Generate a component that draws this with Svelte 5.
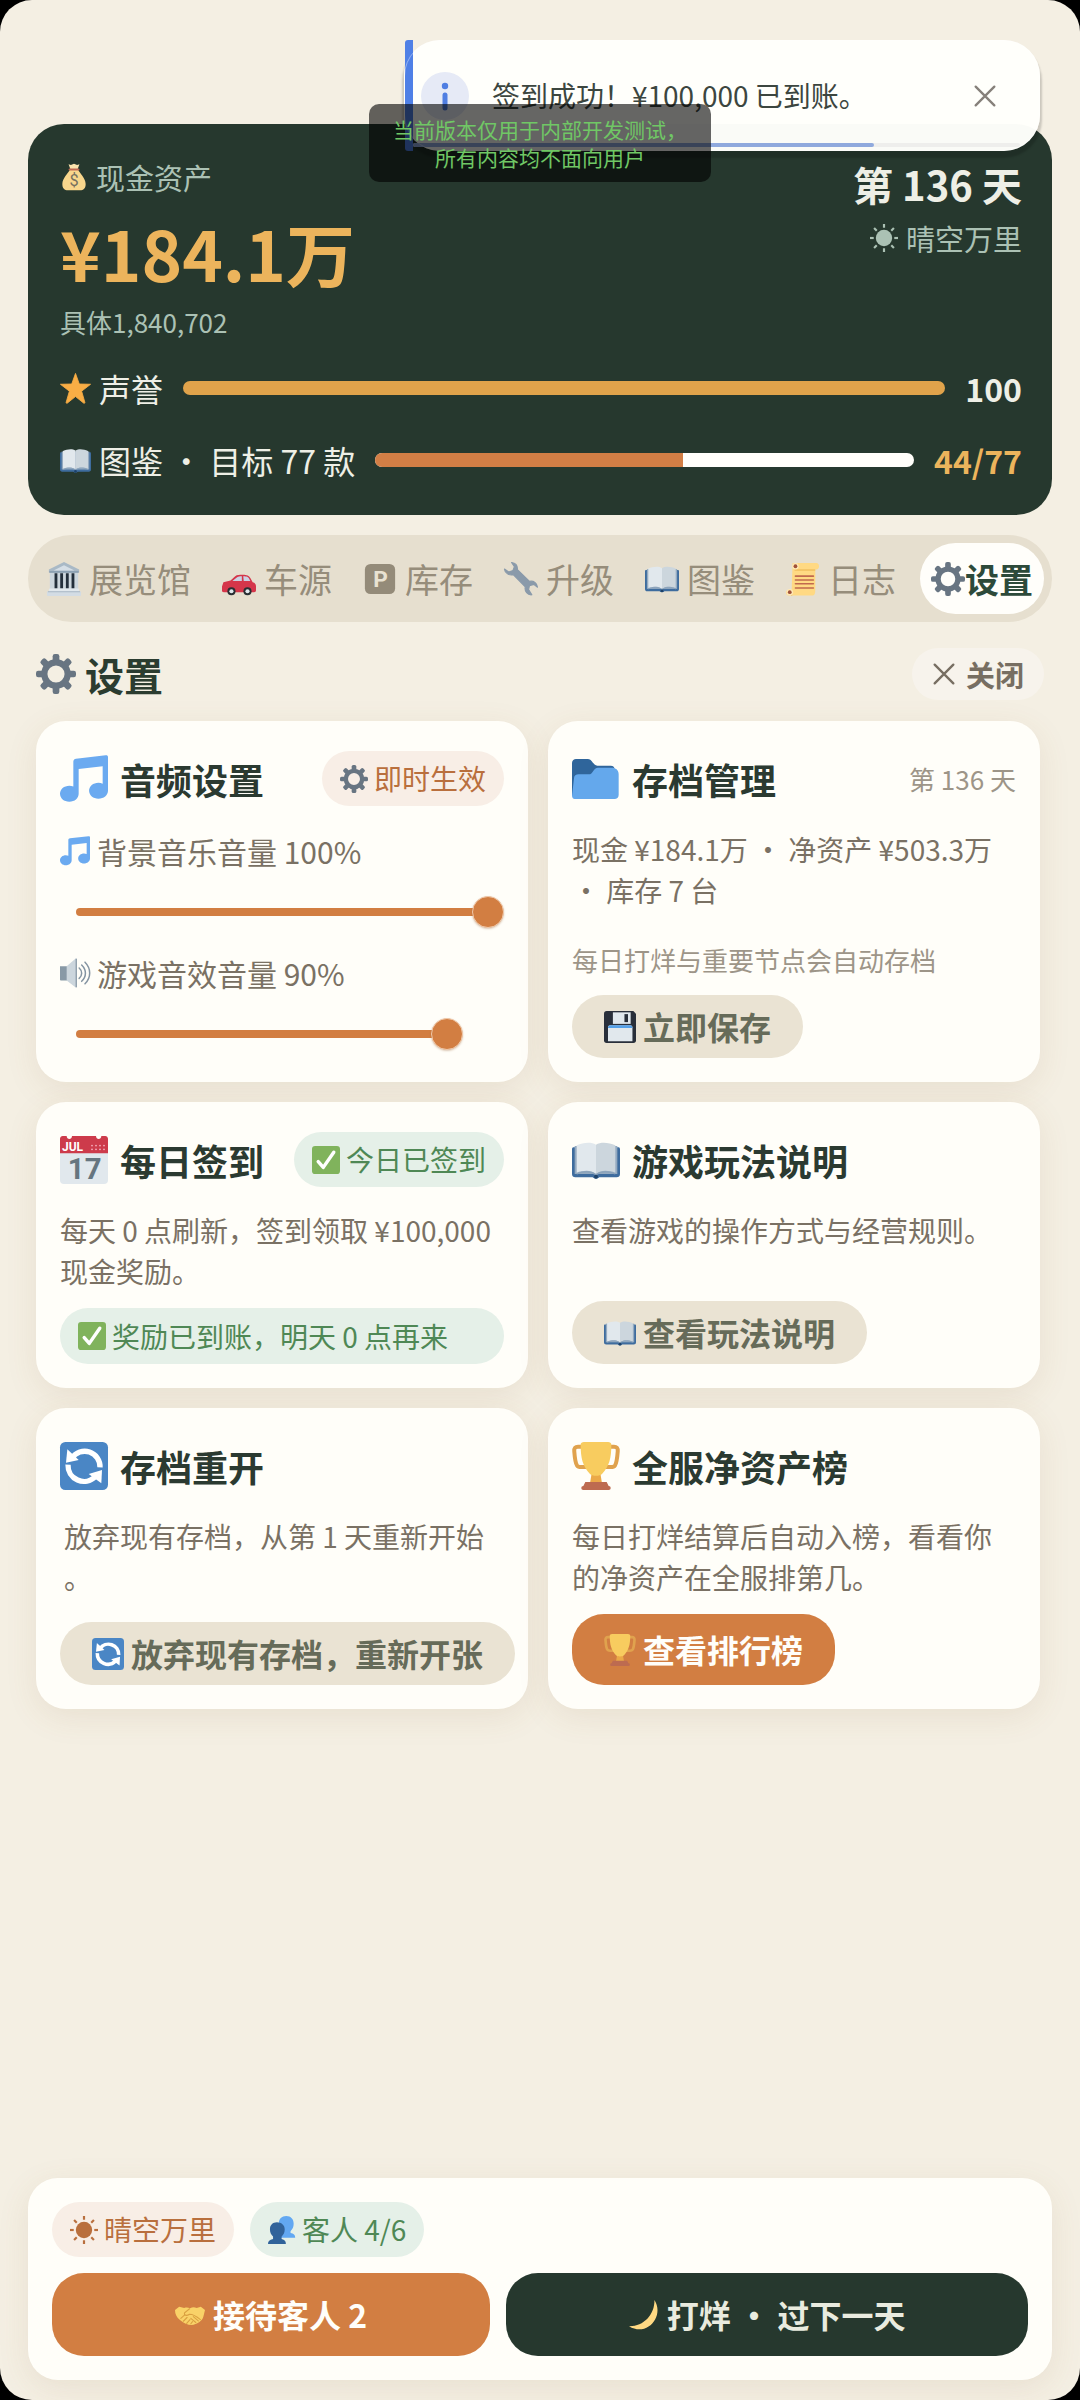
<script>
  const tabs = [
    { icon: 'museum', label: '展览馆' },
    { icon: 'car', label: '车源' },
    { icon: 'parking', label: '库存' },
    { icon: 'wrench', label: '升级' },
    { icon: 'book', label: '图鉴' },
    { icon: 'scroll', label: '日志' },
    { icon: 'gear', label: '设置', active: true }
  ];

  const teeth = [0, 45, 90, 135, 180, 225, 270, 315];
  const calendarDots = [24, 27, 30, 33];

  let music = $state(100);
  let effects = $state(90);
</script>

{#snippet icon(name)}
  <svg class="icon" viewBox="0 0 36 36" aria-hidden="true">
    {#if name === 'bag'}
      <path d="M11 1.5l3 1.2L18 1l4 1.7 3-1.2-2.5 7h-9z" fill="#fbe3ad" />
      <path d="M13 8h10c2 5 10 11 10 19 0 6-3 8-7 8H10c-4 0-7-2-7-8C3 19 11 13 13 8z" fill="#f8d68c" />
      <rect x="11" y="7" width="14" height="2.6" rx="1.3" fill="#bf6952" />
      <text x="18" y="30" text-anchor="middle" class="bag-sign">$</text>
    {:else if name === 'star'}
      <path d="M18 .5l4.4 12.3 13.1.3-10.4 8 3.7 12.8c.3 1-.5 1.6-1.4 1L18 27.3l-9.4 7.6c-.9.6-1.7 0-1.4-1l3.7-12.8-10.4-8 13.1-.3z" fill="#f9ae45" stroke="#f9ae45" stroke-width="1" stroke-linejoin="round" />
    {:else if name === 'book'}
      <path d="M1 8.5h34c.6 0 1 .6 1 1.4v18.6c0 1.600-1 2.500-2.500 2.500H20.500c-1 1.300-4 1.300-5 0H2.500C1 31 0 30.100 0 28.500V9.900c0-.8.4-1.400 1-1.400z" fill="#3e6c9e" />
      <path d="M2 7.500h32v21H2z" fill="#94aac0" />
      <path d="M3.500 7C8 5 14 4 18 6.500v22C14 25 8 26 3.500 27.500z" fill="#e1e8ed" />
      <path d="M32.500 7C28 5 22 4 18 6.500v22c4-3.500 10-2.500 14.500-1z" fill="#ccd6dd" />
      <path d="M3.500 28.500C8 26.500 14 26 18 29c4-3 10-2.500 14.500-.5" fill="none" stroke="#8ba3ba" stroke-width="1" />
      <circle cx="18" cy="30.600" r="1.500" fill="#1e4269" />
    {:else if name === 'sun'}
      <circle cx="18" cy="18" r="10.500" fill="currentColor" />
      {#each teeth as angle}
        <rect x="16.600" y="0" width="2.800" height="4.800" fill="currentColor" transform="rotate({angle} 18 18)" />
      {/each}
    {:else if name === 'museum'}
      <path d="M18 0l16 8v3H2V8z" fill="#a9b9c6" />
      <path d="M18 3.500L29 9H7z" fill="#d5dee6" />
      <path d="M3 11h30v19H3z" fill="#ccd6dd" />
      <path d="M8 12h3v16H8zM14 12h3v16h-3zM20 12h3v16h-3zM26 12h3v16h-3z" fill="#232f3b" />
      <path d="M2.500 9.500h31v2h-31z" fill="#8ca1b3" />
      <rect x="2" y="28" width="32" height="4" rx="1" fill="#e1e8ed" />
      <rect x="0" y="31" width="36" height="5" rx="1" fill="#d3dce4" />
      <path d="M1 31.500h34" stroke="#a6b5c2" stroke-width="1" />
    {:else if name === 'car'}
      <path d="M0 26l1.500-4.500L9 19.500l5-4.500c2-1.500 4-1.500 8-1.500 4.500 0 6.500 1 8 3.500l2.500 4.500c2.500.5 3.500 2 3.500 4.500v4c0 1.500-1 2-2 2H2c-1.500 0-2-.5-2-2z" fill="#d5364a" />
      <path d="M11 20l5-3.800c1.500-1 2.500-1.200 5-1.200v5zM22.500 15c4 0 5 .7 6 2.200l1.500 2.800h-7z" fill="#cbd3e4" />
      <circle cx="10" cy="31" r="4.300" fill="#292f33" /><circle cx="10" cy="31" r="2.200" fill="#e1e8ed" />
      <circle cx="27" cy="31" r="4.300" fill="#292f33" /><circle cx="27" cy="31" r="2.200" fill="#e1e8ed" />
    {:else if name === 'parking'}
      <rect x="2" y="2" width="32" height="32" rx="6" fill="#948b79" />
      <text x="18.500" y="26.500" text-anchor="middle" class="parking-sign">P</text>
    {:else if name === 'wrench'}
      <path d="M8 .5c4 .5 6.500 3 6.200 7.500L27 20.500c4.500-1 8 2 8.500 6.200l-4-3-4.500 1.300-1 4.200 3.500 5.500c-4.500.5-8-3.500-7-8.500L10 13.500C5.500 14.500 1 12 .5 7.500l4.500 3 4.500-1.500L11 5z" fill="#8a9aaa" stroke="#8a9aaa" stroke-width="1.200" stroke-linejoin="round" />
    {:else if name === 'scroll'}
      <path d="M7 1h25c4 0 4 7 0 7h-1v22c0 4-1 5.500-3 5.500H3c-4 0-4-6 0-6h3z" fill="#ffd983" />
      <path d="M9 8.500h22M6 30v5.500" stroke="#e8b04b" stroke-width="1" />
      <circle cx="10" cy="4.500" r="3.400" fill="#ffe8b6" /><circle cx="10" cy="4.500" r="2" fill="#a0523a" />
      <circle cx="4" cy="32" r="3.500" fill="#ffe8b6" /><circle cx="4" cy="32" r="2" fill="#a0523a" />
      <path d="M10 15h19M10 19h19M10 23h19M10 27.500h19" stroke="#c1694f" stroke-width="1.700" stroke-linecap="round" />
    {:else if name === 'gear'}
      <circle cx="18" cy="18" r="10.500" fill="none" stroke="#687582" stroke-width="5.600" />
      {#each teeth as angle}
        <rect x="15" y="0" width="6" height="8" rx="2" fill="#687582" transform="rotate({angle} 18 18)" />
      {/each}
    {:else if name === 'music'}
      <path d="M34.200.2L12 2.800c-1 .1-2 .9-2 2v18.800C9 23.200 8 23 7 23c-4 0-7 2.700-7 6s3 6 7 6 7-2.700 7-6V10.500l18-2v13c-1-.4-2-.6-3.200-.6-3.900 0-7 2.700-7 6s3.100 6 7 6c4 0 7.200-2.700 7.200-6V1.500C36 .5 35.200 0 34.200.2z" fill="#6baaf0" />
    {:else if name === 'speaker'}
      <path d="M0 10h9v17H1c-.6 0-1-.4-1-1z" fill="#8899a6" />
      <path d="M8 10L18.500.8c1-.8 1.500-.5 1.500.5v33.400c0 1-.5 1.300-1.500.5L8 27z" fill="#ccd6dd" />
      <path d="M19.500 1v34" stroke="#8899a6" stroke-width="1.500" />
      <path d="M23 12c4 3.500 4 9 0 12.500M26 8.500c6 6 6 13.500 0 19.500M30 5c7.500 7.500 7.500 18.500 0 26" fill="none" stroke="#8494a2" stroke-width="1.800" stroke-linecap="round" />
    {:else if name === 'folder'}
      <path d="M0 31V6c0-2 1.500-3 3-3h9c3 0 4 5 7 5h10c2 0 3 1 3 3z" fill="#2f659b" />
      <path d="M2 33c-1 0-2-1-2-2.500l1.500-13C1.500 15.500 3 14.500 5 14.500h7.500c3.500 0 3.500-5 7-5H30c2.500 0 5 1.500 5 5V30c0 2-1.500 3-3 3z" fill="#64a8ec" />
    {:else if name === 'floppy'}
      <path d="M3 0h30l3 3v30c0 2-1 3-3 3H3c-2 0-3-1-3-3V3c0-2 1-3 3-3z" fill="#292f3a" />
      <path d="M10 1.500h20v13H10z" fill="#e1e8ed" /><path d="M23 3.500h4v9h-4z" fill="#292f3a" />
      <path d="M4.500 18.500C4.500 17 5.500 16 7 16h22.500c1.500 0 2.500 1 2.500 2.500V34H4.500z" fill="#e1e8ed" />
      <path d="M4.500 19c0-2 1-3 2.500-3h22.500c1.500 0 2.500 1 2.500 3z" fill="#55a0e8" />
    {:else if name === 'calendar'}
      <path d="M0 12h36v21c0 2-1 3-3 3H3c-2 0-3-1-3-3z" fill="#e1e8ed" />
      <path d="M2 0h3c0 3 4 3 4 0h18c0 3 4 3 4 0h3c1 0 2 1 2 2v11H0V2c0-1 1-2 2-2z" fill="#cd3b4b" />
      <text x="1.500" y="11.300" class="calendar-month">JUL</text>
      {#each calendarDots as x}
        <circle cx={x} cy="7.200" r=".7" fill="#f4abba" /><circle cx={x} cy="10" r=".7" fill="#f4abba" />
      {/each}
      <text x="18.500" y="32" text-anchor="middle" class="calendar-day">17</text>
    {:else if name === 'check'}
      <rect width="36" height="36" rx="4" fill="#80b35c" />
      <path d="M8 20l6.500 7.500L28 8" fill="none" stroke="#fff" stroke-width="4.400" stroke-linecap="round" stroke-linejoin="round" />
    {:else if name === 'refresh'}
      <rect width="36" height="36" rx="4" fill="#4a86c5" />
      <path d="M9 12A11.500 11.500 0 0 1 30 19" fill="none" stroke="#fff" stroke-width="4" />
      <path d="M6 17A12 12 0 0 0 26.500 26" fill="none" stroke="#fff" stroke-width="4" />
      <path d="M5.500 5.500L14 13.500 4.500 15.500z" fill="#fff" />
      <path d="M31.500 21l-.5 10-9.500-7z" fill="#fff" />
    {:else if name === 'trophy'}
      <path d="M8 3.500H4.500C2.500 3.500 1.500 4.500 1.700 7c.3 4 .8 8.500 2 10.500.8 1.200 1.700 1.300 3.300 1.300h5M28 3.500h3.500c2 0 3 1 2.800 3.500-.3 4-.8 8.500-2 10.500-.8 1.200-1.700 1.300-3.300 1.300h-5" fill="none" stroke="#e0a24e" stroke-width="3" />
      <path d="M15 22h6l1.500 9h-9z" fill="#eba948" />
      <path d="M6.500 2C6.500.8 7.500 0 9 0h18c1.500 0 2.500.8 2.500 2 0 10-1.500 16-7 22-1.500 1.800-7.500 1.800-9 0C8 18 6.500 12 6.500 2z" fill="#f8cc5f" />
      <path d="M10 30h16l1.500 3c1 0 1.500.6 1.500 1.500S28.500 36 27.500 36h-19C7.500 36 7 35.400 7 34.500S7.500 33 8.500 33z" fill="#bd6b50" />
    {:else if name === 'users'}
      <path d="M14 28V9c0-5 3.500-9 9.500-9S33 4 33 10c0 4-1.500 7-4 9.500V22c4 .8 6 2 6 6z" fill="#62a8f2" />
      <path d="M0 36c0-4 2-5.500 6.500-6.500v-3C4 24 2.500 21 2.500 17c0-5.500 3.500-9 9-9s10 3.500 10 9c0 4-1.500 7-4 9.500v3C21.500 30.500 23 32 23 36z" fill="#31639a" />
    {:else if name === 'handshake'}
      <path d="M0 12l5-4 6 1.500c3-1 5-.5 7 .5 3-1.500 5-1.500 8-.5L31 8l5 4-2 8c-1 5-8 9-14 10-5 0-9-2-14-6-4-3-6-7-6-12z" fill="#f9d268" />
      <path d="M17.500 10.500l-6 5c-1 3 2 4 6 1.500 4 0 10 4 13 6.500M7 22l5-4.500M10 25.500l4.500-4.500M14 28l4-4.500M19 28.500l2-2.500M22 20l6 5M19 22l6 5" fill="none" stroke="#d9a040" stroke-width="1.300" stroke-linecap="round" />
    {:else if name === 'moon'}
      <path d="M30.500 0C43 19 22 45 0 31.500 17 32 31 18 30.500 0z" fill="#ffd983" />
    {:else if name === 'close'}
      <path d="M4 4l28 28M32 4L4 32" stroke="currentColor" stroke-width="3.500" fill="none" stroke-linecap="round" />
    {/if}
  </svg>
{/snippet}

<div class="app">
  <header class="status">
    <div class="status-top">
      <div>
        <div class="label cash-label">{@render icon('bag')}现金资产</div>
        <div class="cash">¥184.1万</div>
        <div class="detail">具体1,840,702</div>
      </div>
      <div class="day">
        <strong>第 136 天</strong>
        <div class="label weather">{@render icon('sun')}晴空万里</div>
      </div>
    </div>
    <div class="meter">
      <span class="meter-name">{@render icon('star')}声誉</span>
      <div class="bar"><div class="fill gold" style="width: 100%"></div></div>
      <strong>100</strong>
    </div>
    <div class="meter">
      <span class="meter-name">{@render icon('book')}图鉴 · 目标 77 款</span>
      <div class="bar"><div class="fill" style="width: {(44 / 77) * 100}%"></div></div>
      <strong class="amber">44/77</strong>
    </div>
  </header>

  <nav class="tabs">
    {#each tabs as tab}
      <button type="button" class:active={tab.active}>{@render icon(tab.icon)}{tab.label}</button>
    {/each}
  </nav>

  <main>
    <div class="heading">
      <h1>{@render icon('gear')}设置</h1>
      <button type="button" class="close">{@render icon('close')}关闭</button>
    </div>

    <div class="cards">
      <section class="card audio">
        <div class="card-head">
          <h2>{@render icon('music')}音频设置</h2>
          <span class="chip warm">{@render icon('gear')}即时生效</span>
        </div>
        <label for="music">{@render icon('music')}背景音乐音量 {music}%</label>
        <div class="slider">
          <div class="track"><div class="track-fill" style="width: {music}%"></div></div>
          <input id="music" type="range" min="0" max="100" bind:value={music} />
        </div>
        <label for="effects">{@render icon('speaker')}游戏音效音量 {effects}%</label>
        <div class="slider">
          <div class="track"><div class="track-fill" style="width: {effects}%"></div></div>
          <input id="effects" type="range" min="0" max="100" bind:value={effects} />
        </div>
      </section>

      <section class="card">
        <div class="card-head">
          <h2>{@render icon('folder')}存档管理</h2>
          <span class="hint">第 136 天</span>
        </div>
        <p>现金 ¥184.1万 · 净资产 ¥503.3万 · 库存 7 台</p>
        <div class="actions">
          <span class="note">每日打烊与重要节点会自动存档</span>
          <button type="button" class="action">{@render icon('floppy')}立即保存</button>
        </div>
      </section>

      <section class="card">
        <div class="card-head">
          <h2>{@render icon('calendar')}每日签到</h2>
          <span class="chip green">{@render icon('check')}今日已签到</span>
        </div>
        <p>每天 0 点刷新，签到领取 ¥100,000 现金奖励。</p>
        <div class="actions">
          <span class="chip green wide">{@render icon('check')}奖励已到账，明天 0 点再来</span>
        </div>
      </section>

      <section class="card">
        <div class="card-head">
          <h2>{@render icon('book')}游戏玩法说明</h2>
        </div>
        <p>查看游戏的操作方式与经营规则。</p>
        <div class="actions">
          <button type="button" class="action">{@render icon('book')}查看玩法说明</button>
        </div>
      </section>

      <section class="card">
        <div class="card-head">
          <h2>{@render icon('refresh')}存档重开</h2>
        </div>
        <p class="inset">放弃现有存档，从第 1 天重新开始。</p>
        <div class="actions">
          <button type="button" class="action">{@render icon('refresh')}放弃现有存档，重新开张</button>
        </div>
      </section>

      <section class="card">
        <div class="card-head">
          <h2>{@render icon('trophy')}全服净资产榜</h2>
        </div>
        <p>每日打烊结算后自动入榜，看看你的净资产在全服排第几。</p>
        <div class="actions">
          <button type="button" class="action primary">{@render icon('trophy')}查看排行榜</button>
        </div>
      </section>
    </div>
  </main>

  <footer>
    <div class="chips">
      <span class="chip warm">{@render icon('sun')}晴空万里</span>
      <span class="chip green">{@render icon('users')}客人 4/6</span>
    </div>
    <div class="turn">
      <button type="button" class="serve">{@render icon('handshake')}接待客人 2</button>
      <button type="button" class="next">{@render icon('moon')}打烊 · 过下一天</button>
    </div>
  </footer>

  <div class="toast" role="status">
    <svg class="info" viewBox="0 0 48 48" aria-hidden="true">
      <circle cx="24" cy="24" r="24" fill="#e6eaf6" />
      <circle cx="24" cy="14" r="3.200" fill="#4f7ee2" />
      <path d="M24 23v13" stroke="#4f7ee2" stroke-width="5" stroke-linecap="round" />
    </svg>
    <span>签到成功！¥100,000 已到账。</span>
    <button type="button" aria-label="关闭通知">{@render icon('close')}</button>
    <div class="timer"><div class="timer-fill" style="width: 76%"></div></div>
  </div>

  <div class="watermark">当前版本仅用于内部开发测试，<br />所有内容均不面向用户</div>
</div>

<style>
  :global(body) {
    margin: 0;
    background: #000;
  }

  .app {
    position: relative;
    box-sizing: border-box;
    display: flex;
    flex-direction: column;
    min-height: 100vh;
    padding: 124px 28px 20px;
    border-radius: 32px;
    background: #f4efe3;
    color: #7a7164;
    font-family: 'Noto Sans CJK SC', 'Noto Sans', sans-serif;
    font-size: 28px;
    line-height: 41px;
  }

  button {
    display: flex;
    align-items: center;
    margin: 0;
    padding: 0;
    border: 0;
    background: none;
    color: inherit;
    font: inherit;
    white-space: nowrap;
    cursor: pointer;
  }

  h1,
  h2,
  p {
    margin: 0;
  }

  .icon {
    flex: none;
    width: 28px;
    height: 28px;
    overflow: visible;
  }

  .bag-sign {
    font: 400 21px Roboto, sans-serif;
    fill: #75705f;
  }

  .parking-sign {
    font: 700 24px Roboto, sans-serif;
    fill: #e9e2d2;
  }

  .calendar-month {
    font: 700 9px Roboto, sans-serif;
    fill: #fff;
  }

  .calendar-day {
    font: 700 22px Roboto, sans-serif;
    fill: #66757f;
  }

  .status {
    padding: 30px 30px 31px 32px;
    border-radius: 36px;
    background: #26382e;
    color: #eeefe6;
  }

  .status-top {
    display: flex;
    justify-content: space-between;
  }

  .label {
    display: flex;
    align-items: center;
    gap: 8px;
    color: #abc1b4;
    font-size: 29px;
  }

  .cash-label {
    line-height: 46px;
  }

  .cash {
    margin: 2px 0;
    color: #ecb45c;
    font-size: 69px;
    font-weight: 700;
    line-height: 100px;
  }

  .detail {
    color: #abc1b4;
    font-size: 26px;
    line-height: 36px;
  }

  .day {
    display: flex;
    flex-direction: column;
    align-items: flex-end;
  }

  .day strong {
    font-size: 40px;
    line-height: 60px;
  }

  .weather {
    line-height: 48px;
  }

  .meter {
    display: flex;
    align-items: center;
    gap: 20px;
    margin-top: 24px;
    font-size: 32px;
    line-height: 48px;
  }

  .meter-name {
    display: flex;
    align-items: center;
    gap: 8px;
  }

  .meter-name .icon {
    width: 31px;
    height: 31px;
  }

  .bar {
    flex: 1;
    height: 14px;
    overflow: hidden;
    border-radius: 7px;
    background: #fffefa;
  }

  .fill {
    height: 100%;
    background: #d27e45;
  }

  .gold {
    background: #e0a34b;
  }

  .amber {
    color: #ecb45c;
  }

  .tabs {
    display: flex;
    gap: 9px;
    margin-top: 20px;
    padding: 8px;
    border-radius: 44px;
    background: #e6dfcf;
    color: #968d7b;
    font-size: 34px;
    line-height: 71px;
  }

  .tabs button {
    gap: 8px;
    padding: 0 11px;
    border-radius: 36px;
  }

  .tabs .icon {
    width: 34px;
    height: 34px;
  }

  .tabs .active {
    gap: 0;
    margin-left: auto;
    background: #fffefa;
    color: #2d4a3a;
    font-weight: 700;
  }

  main {
    padding: 26px 12px 24px 8px;
  }

  .heading {
    display: flex;
    align-items: center;
    justify-content: space-between;
    margin-bottom: 21px;
  }

  h1 {
    display: flex;
    align-items: center;
    gap: 9px;
    color: #2b3c30;
    font-size: 39px;
    line-height: 52px;
  }

  h1 .icon {
    width: 40px;
    height: 40px;
  }

  .close {
    gap: 10px;
    margin-right: -4px;
    padding: 0 20px;
    border-radius: 26px;
    background: #f7f3ec;
    color: #776e62;
    font-size: 29px;
    font-weight: 700;
    line-height: 52px;
  }

  .close .icon {
    width: 24px;
    height: 24px;
  }

  .cards {
    display: grid;
    grid-template-columns: 1fr 1fr;
    gap: 20px;
  }

  .card {
    display: flex;
    flex-direction: column;
    min-width: 0;
    padding: 30px 24px 24px;
    border-radius: 30px;
    background: #fffef9;
    box-shadow: 0 8px 32px rgba(140, 95, 50, 0.1);
  }

  .card-head {
    display: flex;
    align-items: center;
    justify-content: space-between;
    min-height: 55px;
    margin-bottom: 23px;
  }

  h2 {
    display: flex;
    align-items: center;
    gap: 12px;
    color: #2b3a31;
    font-size: 36px;
    line-height: 52px;
    white-space: nowrap;
  }

  h2 .icon {
    width: 48px;
    height: 48px;
  }

  .chip {
    display: flex;
    align-items: center;
    gap: 6px;
    padding: 0 18px;
    border-radius: 28px;
    line-height: 55px;
    white-space: nowrap;
  }

  .warm {
    background: #f8eee6;
    color: #b96f3d;
  }

  .green {
    background: #e5f0e8;
    color: #4f8855;
  }

  .wide {
    align-self: stretch;
    line-height: 56px;
  }

  .hint {
    color: #9d9588;
    font-size: 26px;
  }

  .note {
    margin-bottom: 15px;
    color: #9d9588;
    font-size: 26px;
    line-height: 40px;
  }

  .inset {
    padding: 0 4px;
    line-break: anywhere;
  }

  .actions {
    display: flex;
    flex-direction: column;
    align-items: flex-start;
    margin-top: auto;
    padding-top: 16px;
  }

  .action {
    gap: 7px;
    padding: 0 32px;
    border-radius: 32px;
    background: #eae3d3;
    color: #666b59;
    font-size: 32px;
    font-weight: 700;
    line-height: 63px;
  }

  .action .icon {
    width: 32px;
    height: 32px;
  }

  .primary {
    background: #d27e42;
    color: #fffefa;
    line-height: 71px;
  }

  .audio {
    padding-bottom: 32px;
  }

  label {
    display: flex;
    align-items: center;
    gap: 7px;
    font-size: 30px;
    line-height: 44px;
  }

  label .icon {
    width: 30px;
    height: 30px;
  }

  .slider {
    display: grid;
    align-items: center;
    margin: 23px 0;
  }

  .slider:last-child {
    margin-bottom: 0;
  }

  .track,
  .slider input {
    grid-area: 1 / 1;
  }

  .track {
    margin: 0 16px;
  }

  .track-fill {
    height: 8px;
    border-radius: 4px;
    background: #d27e42;
  }

  .slider input {
    appearance: none;
    width: 100%;
    height: 32px;
    margin: 0;
    background: none;
  }

  .slider input::-webkit-slider-thumb {
    appearance: none;
    width: 32px;
    height: 32px;
    border: 1px solid #f0c9ab;
    border-radius: 50%;
    background: #d27e42;
    box-shadow: 0 1px 2px rgba(140, 80, 30, 0.3);
  }

  footer {
    margin-top: auto;
    padding: 24px;
    border-radius: 30px;
    background: #fffef9;
    box-shadow: 0 8px 32px rgba(140, 95, 50, 0.1);
  }

  .chips {
    display: flex;
    gap: 16px;
    margin-bottom: 16px;
  }

  .turn {
    display: grid;
    grid-template-columns: 21fr 25fr;
    gap: 16px;
  }

  .turn button {
    justify-content: center;
    gap: 8px;
    border-radius: 32px;
    color: #fffefa;
    font-size: 32px;
    font-weight: 700;
    line-height: 83px;
  }

  .turn .icon {
    width: 30px;
    height: 30px;
  }

  .turn .serve {
    background: #d27e42;
  }

  .turn .next {
    background: #26382e;
    color: #e9ebdf;
  }

  .toast {
    position: absolute;
    top: 40px;
    right: 40px;
    box-sizing: border-box;
    display: flex;
    align-items: center;
    width: 636px;
    height: 111px;
    padding: 0 43px 0 17px;
    border-radius: 36px;
    background: rgba(255, 255, 251, 0.98);
    box-shadow: 0 5px 2px 2px rgba(0, 0, 0, 0.17);
    color: #3c463f;
  }

  .toast::before {
    content: '';
    position: absolute;
    top: 0;
    bottom: 0;
    left: 1px;
    width: 8px;
    border-radius: 3px 0 0 3px;
    background: #4f80e6;
  }

  .toast::after {
    content: '';
    position: absolute;
    inset: 0;
    border: 1px solid rgba(255, 255, 255, 0.4);
    border-radius: 36px;
    pointer-events: none;
  }

  .info {
    width: 48px;
    height: 48px;
    margin-right: 23px;
  }

  .toast button {
    margin-left: auto;
    color: #86807a;
  }

  .toast button .icon {
    width: 24px;
    height: 24px;
  }

  .timer {
    position: absolute;
    right: 20px;
    bottom: 4px;
    left: 9px;
    height: 4px;
    border-radius: 2px;
    background: #eeeeec;
  }

  .timer-fill {
    height: 100%;
    border-radius: 2px;
    background: #8fa9dd;
  }

  .watermark {
    position: absolute;
    top: 104px;
    left: 50%;
    transform: translateX(-50%);
    padding: 11px 24px;
    border-radius: 10px;
    background: rgba(0, 0, 0, 0.6);
    color: #70c765;
    font-size: 21px;
    line-height: 28px;
    text-align: center;
    white-space: nowrap;
  }
</style>
